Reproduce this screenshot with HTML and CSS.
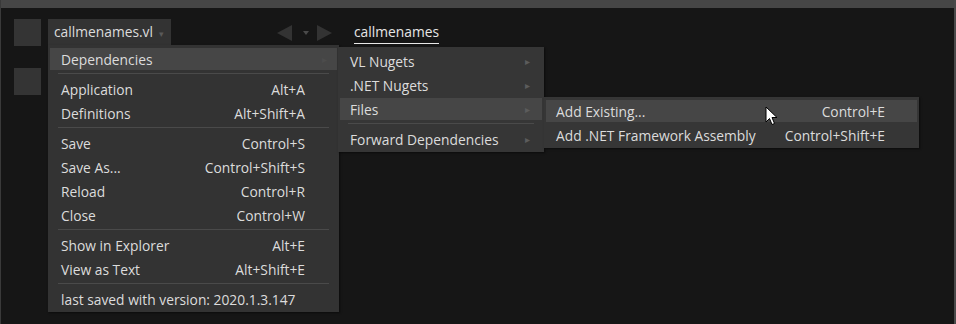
FILE: index.html
```html
<!DOCTYPE html>
<html lang="en">
<head>
  <meta charset="UTF-8">
  <title>callmenames.vl</title>
  <link rel="stylesheet" href="styles.css">
</head>
<body>
  <div class="window">
    <div class="titlebar"></div>
    <div class="workspace">
      <div class="side">
        <div class="square"></div>
        <div class="square second"></div>
      </div>
      <div class="tabs">
        <div class="tab active">callmenames.vl <span class="caret">&#9662;</span></div>
        <div class="nav">
          <svg width="60" height="16" viewBox="0 0 60 16">
            <polygon points="0,8 15,0 15,16" fill="#333"/>
            <polygon points="26,6 32,6 29,10" fill="#4a4a4a"/>
            <polygon points="40,0 55,8 40,16" fill="#333"/>
          </svg>
        </div>
        <div class="tab doc">callmenames</div>
      </div>
    </div>

    <!-- main file menu -->
    <div class="menu menu-file">
      <div class="item hover"><span>Dependencies</span><span class="arrow dim">&#9656;</span></div>
      <div class="sep"></div>
      <div class="item"><span>Application</span><span>Alt+A</span></div>
      <div class="item"><span>Definitions</span><span>Alt+Shift+A</span></div>
      <div class="sep"></div>
      <div class="item"><span>Save</span><span>Control+S</span></div>
      <div class="item"><span>Save As...</span><span>Control+Shift+S</span></div>
      <div class="item"><span>Reload</span><span>Control+R</span></div>
      <div class="item"><span>Close</span><span>Control+W</span></div>
      <div class="sep"></div>
      <div class="item"><span>Show in Explorer</span><span>Alt+E</span></div>
      <div class="item"><span>View as Text</span><span>Alt+Shift+E</span></div>
      <div class="sep"></div>
      <div class="item"><span>last saved with version: 2020.1.3.147</span></div>
    </div>

    <!-- dependencies submenu -->
    <div class="menu menu-deps">
      <div class="item"><span>VL Nugets</span><span class="arrow">&#9656;</span></div>
      <div class="item"><span>.NET Nugets</span><span class="arrow">&#9656;</span></div>
      <div class="item hover"><span>Files</span><span class="arrow">&#9656;</span></div>
      <div class="sep"></div>
      <div class="item"><span>Forward Dependencies</span><span class="arrow">&#9656;</span></div>
    </div>

    <!-- files submenu -->
    <div class="menu menu-files">
      <div class="item hover"><span>Add Existing...</span><span>Control+E</span></div>
      <div class="item"><span>Add .NET Framework Assembly</span><span>Control+Shift+E</span></div>
    </div>

    <svg class="cursor" width="14" height="20" viewBox="0 0 14 20">
      <path d="M1 1 L1 16 L4.5 12.5 L7 18.5 L9.5 17.5 L7 11.5 L12 11.5 Z" fill="#fff" stroke="#000" stroke-width="1"/>
    </svg>
  </div>
</body>
</html>
```

FILE: styles.css
```css
body {
  margin: 0;
  background: #161616;
  font-family: "Open Sans", "Noto Sans", sans-serif;
  font-size: 13.8px;
  color: #dcdcdc;
  overflow: hidden;
}

.window {
  position: relative;
  width: 956px;
  height: 324px;
  box-sizing: border-box;
  border-left: 1px solid #3a3a3a;
  border-right: 2px solid #4a4a4a;
  background: #161616;
}

.titlebar {
  height: 8px;
  background: #464646;
}

.workspace {
  display: flex;
  padding: 11px 0 0 13px;
}

.side {
  display: flex;
  flex-direction: column;
  gap: 22px;
  width: 34px;
}

.square {
  width: 27px;
  height: 27px;
  background: #343434;
}

.tabs {
  display: flex;
  align-items: flex-start;
}

.tab {
  height: 26px;
  line-height: 26px;
  box-sizing: border-box;
}

.tab.active {
  background: #333;
  padding: 0 8px 0 6px;
  width: 123px;
  white-space: nowrap;
}

.caret {
  font-size: 9px;
  color: #5a5a5a;
  margin-left: 2px;
}

.nav {
  margin-left: 106px;
  padding-top: 6px;
  width: 77px;
}

.doc {
  border-bottom: 1px solid #e8e8e8;
  height: 25px;
  color: #e6e6e6;
}

.menu {
  position: absolute;
  display: flex;
  flex-direction: column;
  gap: 2px;
  background: #333;
  box-shadow: 1px 1px 2px rgba(0, 0, 0, 0.5);
  padding: 3px 2px;
  box-sizing: border-box;
}

.menu-file {
  left: 47px;
  top: 45px;
  width: 291px;
  height: 267px;
}

.menu-deps {
  left: 337px;
  top: 47px;
  width: 206px;
  height: 105px;
  background: #363636;
}

.menu-files {
  left: 543px;
  top: 97px;
  width: 375px;
  height: 51px;
  background: #363636;
}

.item {
  display: flex;
  justify-content: space-between;
  align-items: center;
  height: 22px;
  flex: none;
  padding: 0 32px 0 11px;
  white-space: nowrap;
}

.menu-deps .item {
  padding: 0 12px 0 10px;
}

.menu-files .item {
  padding: 0 32px 0 10px;
}

.item.hover {
  background: #464646;
}

.arrow {
  font-size: 10px;
  color: #5c5c5c;
}

.arrow.dim {
  color: #4c4c4c;
  margin-right: -22px;
}

.sep {
  flex: none;
  height: 1px;
  background: #4a4a4a;
  margin: 1px 8px 2px;
}

.cursor {
  position: absolute;
  left: 764px;
  top: 106px;
}
```
